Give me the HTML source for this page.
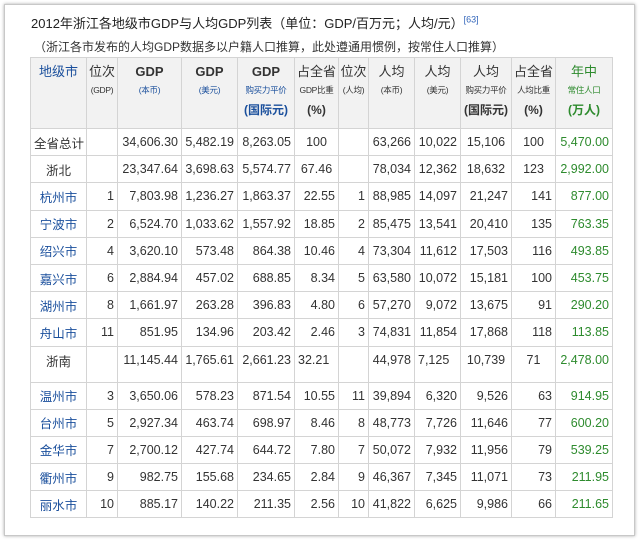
<!DOCTYPE html>
<html><head><meta charset="utf-8"><style>
*{margin:0;padding:0;box-sizing:border-box}
body{width:640px;height:542px;background:#fff;font-family:"Liberation Sans","Noto Sans CJK SC",sans-serif;position:relative;overflow:hidden;color:#222}
.frame{position:absolute;left:4px;top:4px;width:631px;height:532px;border:1px solid #c8c8c8;box-shadow:0 0 3px #aaa;background:#fff}
.t1{position:absolute;left:31px;top:13px;font-size:13px;color:#222}
.t1 sup{color:#3366bb;font-size:9px}
.t2{position:absolute;left:34px;top:38px;font-size:12px;color:#333}
table{position:absolute;left:30px;top:57px;width:582px;border-collapse:collapse;font-size:12.5px;table-layout:fixed;color:#333}
td,th{border:1px solid #d4d4d4;height:27.2px;padding:0 3px;text-align:right;white-space:nowrap;overflow:hidden}
th{background:#f2f2f2;height:71px;vertical-align:top;text-align:center;font-weight:normal;font-size:13px;padding:5px 0 0;line-height:1.4}
th b{font-size:13px}
th small{font-size:8.5px;display:block;line-height:2.3;letter-spacing:-0.3px}
th .u{font-size:12px;font-weight:bold;line-height:1}
.b{color:#1a4f9c}
.g{color:#2e8b2e}
td.n{text-align:center}
td:first-child{text-align:center}
tr.gap td{height:36px;padding-bottom:8px}
</style></head><body>
<div class="frame"></div>
<div class="t1">2012年浙江各地级市GDP与人均GDP列表（单位：GDP/百万元；人均/元）<sup>[63]</sup></div>
<div class="t2">（浙江各市发布的人均GDP数据多以户籍人口推算，此处遵通用惯例，按常住人口推算）</div>
<table>
<colgroup><col style="width:56px"><col style="width:31px"><col style="width:64px"><col style="width:56px"><col style="width:57px"><col style="width:44px"><col style="width:30px"><col style="width:46px"><col style="width:46px"><col style="width:51px"><col style="width:44px"><col style="width:57px"></colgroup>
<tr><th class="b">地级市</th><th>位次<small>(GDP)</small></th><th><b>GDP</b><small class="b">(本币)</small></th><th><b>GDP</b><small class="b">(美元)</small></th><th><b>GDP</b><small class="b">购买力平价</small><span class="u b">(国际元)</span></th><th>占全省<small>GDP比重</small><span class="u">(%)</span></th><th>位次<small>(人均)</small></th><th>人均<small>(本币)</small></th><th>人均<small>(美元)</small></th><th>人均<small>购买力平价</small><span class="u">(国际元)</span></th><th>占全省<small>人均比重</small><span class="u">(%)</span></th><th class="g">年中<small>常住人口</small><span class="u">(万人)</span></th></tr>
<tr><td>全省总计</td><td></td><td>34,606.30</td><td>5,482.19</td><td>8,263.05</td><td class="n">100</td><td></td><td>63,266</td><td>10,022</td><td class="n">15,106</td><td class="n">100</td><td class="g">5,470.00</td></tr>
<tr><td>浙北</td><td></td><td>23,347.64</td><td>3,698.63</td><td>5,574.77</td><td class="n">67.46</td><td></td><td>78,034</td><td>12,362</td><td class="n">18,632</td><td class="n">123</td><td class="g">2,992.00</td></tr>
<tr><td class="b">杭州市</td><td>1</td><td>7,803.98</td><td>1,236.27</td><td>1,863.37</td><td>22.55</td><td>1</td><td>88,985</td><td>14,097</td><td>21,247</td><td>141</td><td class="g">877.00</td></tr>
<tr><td class="b">宁波市</td><td>2</td><td>6,524.70</td><td>1,033.62</td><td>1,557.92</td><td>18.85</td><td>2</td><td>85,475</td><td>13,541</td><td>20,410</td><td>135</td><td class="g">763.35</td></tr>
<tr><td class="b">绍兴市</td><td>4</td><td>3,620.10</td><td>573.48</td><td>864.38</td><td>10.46</td><td>4</td><td>73,304</td><td>11,612</td><td>17,503</td><td>116</td><td class="g">493.85</td></tr>
<tr><td class="b">嘉兴市</td><td>6</td><td>2,884.94</td><td>457.02</td><td>688.85</td><td>8.34</td><td>5</td><td>63,580</td><td>10,072</td><td>15,181</td><td>100</td><td class="g">453.75</td></tr>
<tr><td class="b">湖州市</td><td>8</td><td>1,661.97</td><td>263.28</td><td>396.83</td><td>4.80</td><td>6</td><td>57,270</td><td>9,072</td><td>13,675</td><td>91</td><td class="g">290.20</td></tr>
<tr><td class="b">舟山市</td><td>11</td><td>851.95</td><td>134.96</td><td>203.42</td><td>2.46</td><td>3</td><td>74,831</td><td>11,854</td><td>17,868</td><td>118</td><td class="g">113.85</td></tr>
<tr class="gap"><td>浙南</td><td></td><td>11,145.44</td><td>1,765.61</td><td>2,661.23</td><td style="text-align:left">32.21</td><td></td><td>44,978</td><td style="text-align:left">7,125</td><td class="n">10,739</td><td class="n">71</td><td class="g">2,478.00</td></tr>
<tr><td class="b">温州市</td><td>3</td><td>3,650.06</td><td>578.23</td><td>871.54</td><td>10.55</td><td>11</td><td>39,894</td><td>6,320</td><td>9,526</td><td>63</td><td class="g">914.95</td></tr>
<tr><td class="b">台州市</td><td>5</td><td>2,927.34</td><td>463.74</td><td>698.97</td><td>8.46</td><td>8</td><td>48,773</td><td>7,726</td><td>11,646</td><td>77</td><td class="g">600.20</td></tr>
<tr><td class="b">金华市</td><td>7</td><td>2,700.12</td><td>427.74</td><td>644.72</td><td>7.80</td><td>7</td><td>50,072</td><td>7,932</td><td>11,956</td><td>79</td><td class="g">539.25</td></tr>
<tr><td class="b">衢州市</td><td>9</td><td>982.75</td><td>155.68</td><td>234.65</td><td>2.84</td><td>9</td><td>46,367</td><td>7,345</td><td>11,071</td><td>73</td><td class="g">211.95</td></tr>
<tr><td class="b">丽水市</td><td>10</td><td>885.17</td><td>140.22</td><td>211.35</td><td>2.56</td><td>10</td><td>41,822</td><td>6,625</td><td>9,986</td><td>66</td><td class="g">211.65</td></tr>
</table>
</body></html>
